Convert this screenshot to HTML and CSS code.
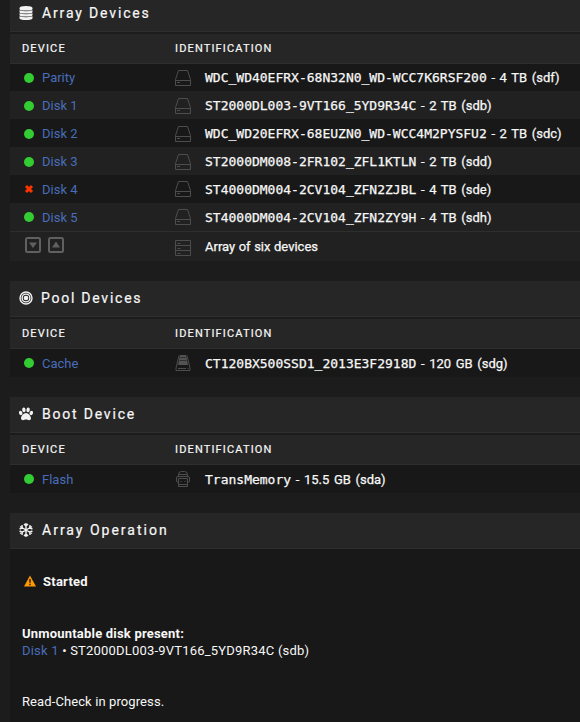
FILE: index.html
```
<!DOCTYPE html>
<html lang="en">

<head>
    <meta charset="UTF-8">
    <meta name="viewport" content="width=device-width, initial-scale=1.0">
    <title>Main</title>
    <link rel="stylesheet" href="styles.css">
</head>

<body>
    <!-- Shared device icons -->
    <svg class="symbols">
        <symbol id="drive" viewBox="0 0 16 16">
            <path d="M3.500 .5h9l3 9v6H.5v-6zM.5 10.500h15M2 12.500h3" />
        </symbol>
        <symbol id="array" viewBox="0 0 16 16">
            <path d="M.5.5h15v15H.5zM.5 5.500h15M.5 10.500h15M2.500 3.500h3M2.500 8.500h3M2.500 13.500h3" />
        </symbol>
        <symbol id="ssd" viewBox="0 0 16 16">
            <path d="M4 .5L1 13v2.500h14V13L12 .5M3 13.500h8M12.500 13.500h1" />
            <path class="solid" d="M5 0h6l2 10H3z" />
            <path class="cut" d="M5.500 2.500h5M4.500 5.500h7" />
        </symbol>
        <symbol id="usb" viewBox="0 0 16 16">
            <path d="M3.500 5V3.500q0-3 3-3h3q3 0 3 3V5M3.500 3.500h9M3 11H2.500q-1 0-1-1V7q0-1.500 1.500-1.500h10q1.500 0 1.500 1.500v3q0 1-1 1H13M3.500 7.500h9v8h-9zM5.500 10.500h1M9.500 10.500h1M3.500 13.500h9" />
        </symbol>
    </svg>

    <div class="container">
        <section class="first">
            <h2 class="title">
                <svg class="title-icon" viewBox="0 0 14 14">
                    <path d="M.5 2Q.5 0 7 0t6.500 2v1Q13.500 4.600 7 4.600T.5 3zM.5 4.200Q3 5.300 7 5.300t6.500-1.100v1.800Q13.500 7.600 7 7.600T.5 6zM.5 7.200Q3 8.300 7 8.300t6.500-1.100v1.800Q13.500 10.600 7 10.600T.5 9zM.5 10.200Q3 11.300 7 11.300T13.500 10.200v2Q13.500 14 7 14T.5 12.200z" />
                </svg>
                <span>Array Devices</span>
            </h2>
            <div class="row head"><span>DEVICE</span><span>IDENTIFICATION</span></div>
            <div class="row">
                <div class="device"><i class="orb"></i><a>Parity</a></div>
                <div class="ident"><svg class="icon"><use href="#drive" /></svg><span><b>WDC_WD40EFRX-68N32N0_WD-WCC7K6RSF200</b> - 4 TB (sdf)</span></div>
            </div>
            <div class="row alt">
                <div class="device"><i class="orb"></i><a>Disk 1</a></div>
                <div class="ident"><svg class="icon"><use href="#drive" /></svg><span><b>ST2000DL003-9VT166_5YD9R34C</b> - 2 TB (sdb)</span></div>
            </div>
            <div class="row">
                <div class="device"><i class="orb"></i><a>Disk 2</a></div>
                <div class="ident"><svg class="icon"><use href="#drive" /></svg><span><b>WDC_WD20EFRX-68EUZN0_WD-WCC4M2PYSFU2</b> - 2 TB (sdc)</span></div>
            </div>
            <div class="row alt">
                <div class="device"><i class="orb"></i><a>Disk 3</a></div>
                <div class="ident"><svg class="icon"><use href="#drive" /></svg><span><b>ST2000DM008-2FR102_ZFL1KTLN</b> - 2 TB (sdd)</span></div>
            </div>
            <div class="row">
                <div class="device">
                    <svg class="cross" viewBox="0 0 10 10"><path d="M2 2l6 6M8 2L2 8" /></svg><a>Disk 4</a>
                </div>
                <div class="ident"><svg class="icon"><use href="#drive" /></svg><span><b>ST4000DM004-2CV104_ZFN2ZJBL</b> - 4 TB (sde)</span></div>
            </div>
            <div class="row alt">
                <div class="device"><i class="orb"></i><a>Disk 5</a></div>
                <div class="ident"><svg class="icon"><use href="#drive" /></svg><span><b>ST4000DM004-2CV104_ZFN2ZY9H</b> - 4 TB (sdh)</span></div>
            </div>
            <div class="row alt total">
                <div class="toggles">
                    <svg class="toggle" viewBox="0 0 16 16"><rect x="1" y="1" width="14" height="14" rx="1.500" /><path d="M4 5.500h8L8 11z" /></svg>
                    <svg class="toggle" viewBox="0 0 16 16"><rect x="1" y="1" width="14" height="14" rx="1.500" /><path d="M4 10.500h8L8 4.500z" /></svg>
                </div>
                <div class="ident"><svg class="icon"><use href="#array" /></svg><span>Array of six devices</span></div>
            </div>
        </section>

        <section>
            <h2 class="title pool">
                <svg class="title-icon rings" viewBox="0 0 14 14">
                    <circle cx="7" cy="7" r="6" /><circle cx="7" cy="7" r="3.900" /><circle class="dot" cx="7" cy="7" r="2.300" />
                </svg>
                <span>Pool Devices</span>
            </h2>
            <div class="row head"><span>DEVICE</span><span>IDENTIFICATION</span></div>
            <div class="row">
                <div class="device"><i class="orb"></i><a>Cache</a></div>
                <div class="ident"><svg class="icon"><use href="#ssd" /></svg><span><b>CT120BX500SSD1_2013E3F2918D</b> - 120 GB (sdg)</span></div>
            </div>
        </section>

        <section>
            <h2 class="title boot">
                <svg class="title-icon" viewBox="0 0 14 14">
                    <ellipse cx="1.700" cy="6" rx="1.700" ry="2.200" transform="rotate(-20 1.700 6)" />
                    <ellipse cx="4.900" cy="2.900" rx="1.700" ry="2.400" transform="rotate(-8 4.900 2.900)" />
                    <ellipse cx="9.100" cy="2.900" rx="1.700" ry="2.400" transform="rotate(8 9.100 2.900)" />
                    <ellipse cx="12.300" cy="6" rx="1.700" ry="2.200" transform="rotate(20 12.300 6)" />
                    <path d="M7 6c2.200 0 5 3 5 5.300 0 1.300-.9 1.900-2 1.900S8 12.500 7 12.500s-1.900.7-3 .7-2-.6-2-1.900C2 9 4.800 6 7 6z" />
                </svg>
                <span>Boot Device</span>
            </h2>
            <div class="row head"><span>DEVICE</span><span>IDENTIFICATION</span></div>
            <div class="row">
                <div class="device"><i class="orb"></i><a>Flash</a></div>
                <div class="ident"><svg class="icon"><use href="#usb" /></svg><span><b>TransMemory</b> - 15.5 GB (sda)</span></div>
            </div>
        </section>

        <section class="operation">
            <h2 class="title">
                <svg class="title-icon snow" viewBox="0 0 14 14">
                    <path d="M7 0v14M1 3.500l12 7M13 3.500l-12 7M5 1l2 2 2-2M5 13l2-2 2 2M.6 6l2.700-1.200L3 2M13.400 6l-2.700-1.200L11 2M.6 8l2.700 1.200L3 12M13.400 8l-2.700 1.200L11 12" />
                </svg>
                <span>Array Operation</span>
            </h2>
            <div class="status">
                <p class="started">
                    <svg class="warning" viewBox="0 0 12 12"><path d="M6 .5L12 11.500H0z" /><path class="mark" d="M6 4v3.700M6 8.800v1.500" /></svg>
                    <strong>Started</strong>
                </p>
                <p class="unmountable"><strong>Unmountable disk present:</strong><br><span><a>Disk 1</a> &bull; ST2000DL003-9VT166_5YD9R34C (sdb)</span></p>
                <p class="progress">Read-Check in progress.</p>
            </div>
        </section>
    </div>
</body>

</html>
```
FILE: styles.css
```
body {
    margin: 0;
    background-color: #1c1c1c;
    color: #f7f7f7;
    font-family: Roboto, "Liberation Sans", sans-serif;
    font-size: 13px;
    overflow: hidden;
}

.symbols {
    display: none;
}

.container {
    margin-left: 10px;
    height: 722px;
    display: flex;
    flex-direction: column;
}

section {
    margin-bottom: 20px;
    flex: none;
}

.title {
    display: flex;
    align-items: center;
    box-sizing: border-box;
    height: 36px;
    margin: 0 0 2px;
    padding: 0 0 1px 9px;
    background-color: #262626;
    border-bottom: 1px solid #2e2e2e;
    font-size: 14px;
    font-weight: normal;
    letter-spacing: 1.85px;
    gap: 9px;
    -webkit-text-stroke: 0.2px;
}

.title.pool {
    gap: 8px;
    letter-spacing: 1.75px;
}

.title.boot {
    letter-spacing: 1.8px;
}

.first .title {
    height: 32px;
    padding-bottom: 5px;
}

.title-icon {
    width: 14px;
    height: 14px;
    fill: #f2f2f2;
}

.rings {
    fill: none;
    stroke: #f2f2f2;
    stroke-width: 1.4;
}

.rings .dot {
    fill: #f2f2f2;
    stroke: none;
}

.snow {
    fill: none;
    stroke: #f2f2f2;
    stroke-width: 1.4;
}

.row {
    display: grid;
    grid-template-columns: 153px 1fr;
    align-items: center;
    box-sizing: border-box;
    height: 28px;
    padding: 1px 0 0 12px;
    background-color: #181818;
    white-space: nowrap;
}

.first .row {
    height: 27.9px;
    padding-top: 0.6px;
}

.row.alt {
    background-color: #212121;
}

.row.head {
    height: 30px;
    padding-top: 0;
    background-color: #262626;
    border-bottom: 1px solid #2e2e2e;
    font-size: 11px;
    letter-spacing: 1.15px;
    -webkit-text-stroke: 0.2px;
}

.first .row.head {
    height: 29.6px;
    padding-top: 0;
}

.first .row.total {
    height: 30px;
    padding-top: 0;
    border-top: 1px solid #2e2e2e;
}

.device {
    display: flex;
    align-items: center;
    padding-left: 2px;
    gap: 8px;
}

.orb {
    width: 10px;
    height: 10px;
    border-radius: 50%;
    background-color: #33cc33;
}

.cross {
    width: 10px;
    height: 10px;
    stroke: #ff3300;
    stroke-width: 3;
}

a {
    color: #486dba;
}

.ident {
    display: flex;
    align-items: center;
    gap: 14px;
    word-spacing: 1.4px;
    -webkit-text-stroke: 0.25px;
}

.total .ident {
    word-spacing: 0.3px;
}

.ident b {
    font-family: "DejaVu Sans Mono", monospace;
    font-weight: normal;
}

.icon {
    width: 16px;
    height: 16px;
    fill: none;
    stroke: #4d4d4d;
}

.total .icon {
    margin-top: 3px;
}

.solid {
    fill: #535353;
    stroke: none;
}

.cut {
    stroke: #303030;
}

.toggles {
    display: flex;
    gap: 7px;
    padding: 0 0 2px 3px;
}

.toggle {
    width: 16px;
    height: 16px;
    fill: #606060;
}

.toggle rect {
    fill: none;
    stroke: #606060;
    stroke-width: 2;
}

.operation {
    margin-bottom: 0;
}

.operation .title {
    margin-bottom: 0;
    letter-spacing: 2px;
}

.status {
    height: 173px;
    padding-left: 12px;
    background-color: #181818;
    line-height: 17px;
    overflow: hidden;
}

.status p {
    margin: 0;
}

.status .started {
    display: flex;
    align-items: center;
    gap: 7px;
    padding: 24px 0 0 2px;
    letter-spacing: 0.25px;
}

.warning {
    width: 12px;
    height: 12px;
    fill: #ff9900;
}

.warning .mark {
    stroke: #30200a;
    stroke-width: 1.5;
}

.status .unmountable {
    margin-top: 35px;
    letter-spacing: 0.2px;
}

.status .progress {
    margin-top: 34px;
    letter-spacing: 0.1px;
}
```
